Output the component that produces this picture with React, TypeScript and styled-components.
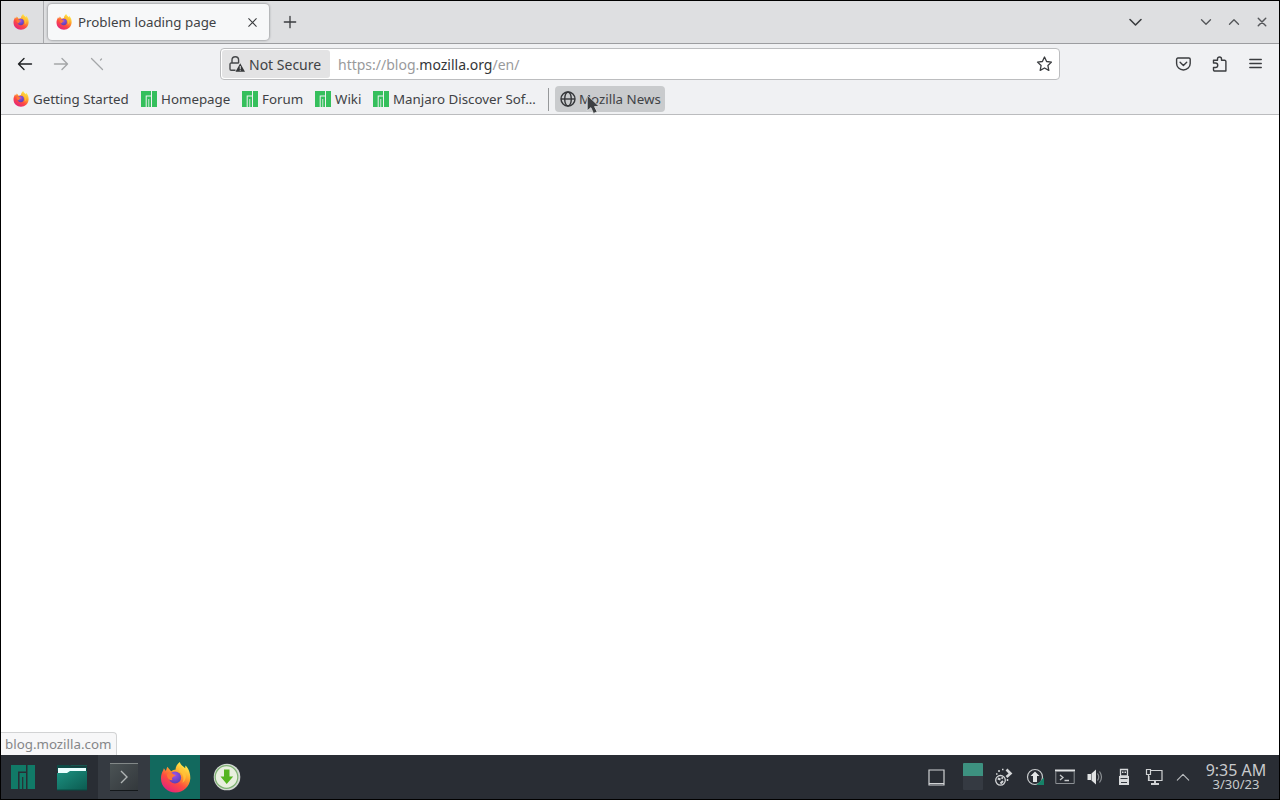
import styled, { createGlobalStyle } from 'styled-components';

const GlobalStyle = createGlobalStyle`
    * {
        box-sizing: border-box;
    }

    body {
        margin: 0;
        overflow: hidden;
        background: #000;
        font-family: 'Noto Sans', sans-serif;
        font-size: 13.33px;
        color: #404245;
    }

    svg {
        display: block;
        flex: none;
    }
`;

const Screen = styled.div`
    width: 1280px;
    height: 800px;
    padding: 1px;
    background: #000;
    display: flex;
    flex-direction: column;
    cursor: default;
    white-space: nowrap;
`;

const TabBar = styled.div`
    height: 43px;
    flex: none;
    display: flex;
    align-items: center;
    background: #dedfe1;
    border-bottom: 1px solid #9c9da0;
`;

const PinnedTab = styled.div`
    width: 43px;
    height: 42px;
    padding-left: 12px;
    display: flex;
    align-items: center;
    border-right: 1px solid #aaabae;
`;

const Tab = styled.div`
    width: 221px;
    height: 36px;
    margin-left: 4px;
    padding: 0 11px 0 8px;
    display: flex;
    align-items: center;
    background: #f7f8f9;
    border-radius: 4px;
    box-shadow: 0 0 2px 1px #a9aaad;
`;

const TabTitle = styled.span`
    flex: 1;
    margin-left: 6px;
`;

const NewTab = styled.div`
    margin-left: 14px;
    flex: 1;
`;

const WindowControls = styled.div`
    display: flex;
    align-items: center;
    padding-right: 11px;
`;

const Control = styled.div<{ $gap?: number }>`
    margin-right: ${({ $gap = 0 }) => $gap}px;
`;

const NavBar = styled.div`
    height: 40px;
    flex: none;
    display: flex;
    align-items: center;
    padding: 0 16px 0 16px;
    background: #f0f1f3;
`;

const NavButtons = styled.div`
    width: 203px;
    display: flex;
    gap: 20px;
`;

const UrlBar = styled.div`
    width: 840px;
    height: 32px;
    padding: 1px 7px 1px 1px;
    display: flex;
    align-items: center;
    background: #fff;
    border: 1px solid #bcbdbf;
    border-radius: 4px;
    font-size: 14px;
`;

const Identity = styled.div`
    width: 108px;
    height: 28px;
    padding-left: 7px;
    display: flex;
    align-items: center;
    gap: 4px;
    background: #e3e3e4;
    border-radius: 3px;
`;

const Url = styled.div`
    flex: 1;
    margin-left: 8px;
    color: #999a9c;

    b {
        font-weight: 400;
        color: #343638;
    }
`;

const NavTools = styled.div`
    margin-left: auto;
    display: flex;
    gap: 20px;
`;

const BookmarksBar = styled.div`
    height: 31px;
    flex: none;
    display: flex;
    align-items: center;
    padding-left: 12px;
    background: #f0f1f3;
    border-bottom: 1px solid #bbbcbe;
`;

const Bookmark = styled.div<{ $width: number; $hovered?: boolean }>`
    position: relative;
    width: ${({ $width }) => $width}px;
    height: 26px;
    padding-left: ${({ $hovered }) => ($hovered ? 5 : 0)}px;
    display: flex;
    align-items: center;
    gap: ${({ $hovered }) => ($hovered ? 3 : 4)}px;
    border-radius: 4px;
    background: ${({ $hovered }) => ($hovered ? '#c9cbcd' : 'transparent')};
`;

const Separator = styled.div`
    width: 1px;
    height: 23px;
    margin-right: 6px;
    background: #96989a;
`;

const Pointer = styled.div`
    position: absolute;
    left: 31px;
    top: 8px;
`;

const Page = styled.div`
    flex: 1;
    display: flex;
    align-items: flex-end;
    background: #fff;
`;

const StatusPanel = styled.div`
    width: 116px;
    height: 23px;
    padding-left: 4px;
    line-height: 22px;
    color: #858688;
    background: #f7f7f8;
    border: solid #d2d3d4;
    border-width: 1px 1px 0 0;
    border-top-right-radius: 4px;
`;

const Taskbar = styled.div`
    height: 44px;
    flex: none;
    display: flex;
    background: #292d34;
`;

const Task = styled.div<{ $width: number; $color?: string }>`
    width: ${({ $width }) => $width}px;
    height: 44px;
    display: flex;
    align-items: center;
    justify-content: center;
    background: ${({ $color }) => $color || 'transparent'};
`;

const Tray = styled.div`
    margin-left: auto;
    display: flex;
    align-items: center;
`;

const TrayItem = styled.div<{ $width: number }>`
    width: ${({ $width }) => $width}px;
    display: flex;
    justify-content: center;
`;

const Pager = styled.div`
    width: 20px;
    height: 27px;
    margin-bottom: 2px;
    border-radius: 1px;
    background: linear-gradient(#3d9180 0 13px, #353a42 13px);
`;

const Clock = styled.div`
    width: 85px;
    padding-right: 1px;
    text-align: center;
    color: #c8cacc;
    font-size: 16px;
    line-height: 14px;
`;

const ClockDate = styled.div`
    font-size: 13px;
    line-height: 14px;
`;

function FirefoxIcon({ size, id }: { size: number; id: string }) {
    return (
        <svg width={size} height={size} viewBox="0 0 32 32">
            <defs>
                <linearGradient id={`${id}-body`} x1="0.8" y1="0.05" x2="0.25" y2="0.95">
                    <stop offset="0.05" stopColor="#ffe84a" />
                    <stop offset="0.35" stopColor="#ffa52b" />
                    <stop offset="0.65" stopColor="#ff4c41" />
                    <stop offset="1" stopColor="#e3257a" />
                </linearGradient>
                <radialGradient id={`${id}-globe`} cx="0.45" cy="0.3" r="0.7">
                    <stop offset="0" stopColor="#a153e8" />
                    <stop offset="1" stopColor="#5840b5" />
                </radialGradient>
            </defs>
            <path
                d="M20.500 0c.5 3 3.500 4.200 5.500 6.500.2-1.200 0-2 .3-2.800 3.600 3.200 5.200 9 5 13.300C30.700 25.500 24 31.500 16 31.500S1 25.500 1 17c0-3.500 1-6 2.300-8.500L4 6.500l2 2.700L7.500 5l4 4.500c2-1 3-1.500 4.500-1.500C16 4.500 18 2 20.500 0z"
                fill={`url(#${id}-body)`}
            />
            <circle cx="15.500" cy="16" r="6.300" fill={`url(#${id}-globe)`} />
            <path d="M7.500 12.500c2.500-2.500 5-1.500 6.500.3 1.500.2 2 .5 2.200 1-.5 1-2 1-2.800 1.600-1.200.8-1.400 2-.4 3-1.500.8-3.500 0-4.500-1.400C7.500 16 6.800 14 7.500 12.500z" fill="#ff7636" />
            <path d="M20 10c4 2 5.500 7 3 11.500 4-2 5-8 2-12.500-1.500-2-3.500-3.500-4-5-1 2-1.500 4-1 6z" fill="#ffc53a" opacity="0.75" />
        </svg>
    );
}

function ManjaroIcon({ size, color }: { size: number; color: string }) {
    return (
        <svg width={size} height={size} viewBox="0 0 16 16" fill={color}>
            <path d="M0 0h10v4.400H4.700V16H0zM5.700 5.400H10V16H8.200V8H7.400v8H5.700zM11 0H16v16h-5z" />
        </svg>
    );
}

function StrokeIcon({ size = 16, d, color = '#3a3c3f', width = 1.4 }: { size?: number; d: string; color?: string; width?: number }) {
    return (
        <svg
            width={size}
            height={size}
            viewBox="0 0 16 16"
            fill="none"
            stroke={color}
            strokeWidth={width}
            strokeLinecap="round"
            strokeLinejoin="round"
        >
            <path d={d} />
        </svg>
    );
}

function LockWarningIcon() {
    return (
        <svg width="16" height="16" viewBox="0 0 16 16">
            <path d="M6.500 14.200H2.200a1.200 1.200 0 0 1-1.200-1.200V8.300A1.200 1.200 0 0 1 2.200 7h7.600M3 7V4a3.300 3.300 0 0 1 6.600 0v3" fill="none" stroke="#46484a" strokeWidth="1.400" />
            <path d="M11.200 7.200L16 15.800H6.500z" fill="#36383a" />
            <path d="M11.250 10v3M11.250 13.700v1" stroke="#e3e3e4" strokeWidth="1" />
        </svg>
    );
}

function GlobeIcon() {
    return (
        <svg width="16" height="16" viewBox="0 0 16 16" fill="none" stroke="#35373a" strokeWidth="1.400">
            <circle cx="8" cy="8" r="7" />
            <ellipse cx="8" cy="8" rx="3.300" ry="7" />
            <path d="M1 8h14" />
        </svg>
    );
}

function FolderIcon() {
    return (
        <svg width="32" height="32" viewBox="0 0 32 32">
            <defs>
                <linearGradient id="folder" x1="0" y1="0" x2="1" y2="1">
                    <stop offset="0" stopColor="#1c9281" />
                    <stop offset="1" stopColor="#0c5a50" />
                </linearGradient>
            </defs>
            <path d="M1 4h12l2 1.500h16V10H1z" fill="#0d4b46" />
            <path d="M14 4h17v1H15z" fill="#16564f" />
            <path d="M2 7h28v6H2z" fill="#eaffff" />
            <path d="M1 12h10l3-2h17v19H1z" fill="url(#folder)" />
            <path d="M1 28.500h30v1H1z" fill="#094b43" />
        </svg>
    );
}

function TerminalIcon() {
    return (
        <svg width="28" height="28" viewBox="0 0 28 28">
            <defs>
                <linearGradient id="terminal" x1="0" y1="0" x2="1" y2="1">
                    <stop offset="0" stopColor="#4b5355" />
                    <stop offset="1" stopColor="#33383c" />
                </linearGradient>
            </defs>
            <path d="M0 0h28v28H0z" fill="url(#terminal)" />
            <path d="M0 .5h28" stroke="#828888" />
            <path d="M0 27.500h28" stroke="#14181b" />
            <path d="M11 8l6 6-6 6" fill="none" stroke="#b0b5b5" strokeWidth="1.400" />
        </svg>
    );
}

function DownloadIcon() {
    return (
        <svg width="28" height="28" viewBox="0 0 28 28">
            <circle cx="14" cy="14" r="13.300" fill="#d3d8d3" />
            <circle cx="13.500" cy="14" r="11.300" fill="#e8efdf" stroke="#7fb373" strokeWidth="1.200" />
            <path d="M11 6.500h5.500v7h3.700L13.700 21l-6.200-7.500H11z" fill="#54b51f" />
        </svg>
    );
}

function SatelliteIcon() {
    return (
        <svg width="20" height="20" viewBox="0 0 20 20" fill="none" stroke="#d4d6d8" strokeWidth="1.600">
            <circle cx="6.500" cy="13.300" r="4.800" strokeWidth="1.300" />
            <path d="M3.800 11.500l2.700 1M6.500 16.500l2.500-2.500M7.500 10.500l1.500 1" strokeWidth="2" />
            <path d="M12.500 2.500l4 4-4 3.500" strokeWidth="2.600" />
            <path d="M4 4h2M8 2.500h1.500M2 7h1.500M13.500 12v2" strokeWidth="1.500" />
        </svg>
    );
}

function UpdateIcon() {
    return (
        <svg width="18" height="18" viewBox="0 0 18 18">
            <circle cx="9" cy="9" r="7.500" fill="none" stroke="#c6c9cb" strokeWidth="1.200" />
            <path d="M9 3.500L13.500 8H11v6H7V8H4.500z" fill="#e3e5e6" />
            <path d="M10.500 17L18 9.500V17z" fill="#168268" />
        </svg>
    );
}

function ConsoleIcon() {
    return (
        <svg width="20" height="16" viewBox="0 0 20 16" fill="none" stroke="#8c9094">
            <path d="M0 1.500h20" strokeWidth="2" stroke="#e0e2e3" />
            <path d="M.8 2v12.500h18.400V2" />
            <path d="M5 6l3 2.500L5 11M9.500 11.500H14" stroke="#c8cacc" strokeWidth="1.300" />
        </svg>
    );
}

function VolumeIcon() {
    return (
        <svg width="18" height="18" viewBox="0 0 18 18">
            <path d="M1.500 6H5v6H1.500zM5.500 5.500L10 1.500v15l-4.500-4z" fill="#e0e2e3" />
            <path d="M11.500 5.500q2.500 3.500 0 7M13.500 3.500q4 5.500 0 11" fill="none" stroke="#8c9094" strokeWidth="1.200" />
        </svg>
    );
}

function UsbIcon() {
    return (
        <svg width="12" height="18" viewBox="0 0 12 18">
            <path d="M2.500 1.500h7V8h-7z" fill="none" stroke="#d8dadc" strokeWidth="1.300" />
            <path d="M4 3.500h1.500V5H4zM6.500 3.500H8V5H6.500z" fill="#d8dadc" />
            <path d="M1 8h10v9H1z" fill="#d8dadc" />
            <path d="M2.500 10.500h7M3 14.500h6" stroke="#353a41" strokeWidth="1.200" />
        </svg>
    );
}

function NetworkIcon() {
    return (
        <svg width="18" height="18" viewBox="0 0 18 18" fill="none" stroke="#d0d2d4" strokeWidth="1.200">
            <path d="M6 2.500h11v10H4V8" />
            <path d="M1.500 1.500h4v5h-4zM3.500 7v6" />
            <path d="M6 16h8M10 13v3" strokeWidth="2" />
        </svg>
    );
}

function PointerIcon() {
    return (
        <svg width="15" height="21" viewBox="0 0 14 20">
            <path d="M1 1v15l3.500-3 2.500 5.500 3.500-1.500L8 12h4.500z" fill="#3e4042" stroke="#e2e3e4" strokeWidth="0.8" />
        </svg>
    );
}

const bookmarks = [
    { label: 'Homepage', width: 101 },
    { label: 'Forum', width: 73 },
    { label: 'Wiki', width: 58 },
    { label: 'Manjaro Discover Sof…', width: 175 },
];

function App() {
    return (
        <Screen>
            <GlobalStyle />

            <TabBar>
                <PinnedTab>
                    <FirefoxIcon size={16} id="pinned" />
                </PinnedTab>
                <Tab>
                    <FirefoxIcon size={16} id="tab" />
                    <TabTitle>Problem loading page</TabTitle>
                    <StrokeIcon size={11} width={1.6} d="M2.500 2.500l11 11M13.500 2.500l-11 11" />
                </Tab>
                <NewTab>
                    <StrokeIcon size={14} width={1.5} d="M8 1.500v13M1.500 8h13" />
                </NewTab>
                <WindowControls>
                    <Control $gap={56}>
                        <StrokeIcon d="M2 5.500L7.500 11 13 5.500" width={1.6} />
                    </Control>
                    <Control $gap={16}>
                        <StrokeIcon size={12} d="M2 5l6 6 6-6" color="#55575a" width={1.8} />
                    </Control>
                    <Control $gap={16}>
                        <StrokeIcon size={12} d="M2 11l6-6 6 6" color="#55575a" width={1.8} />
                    </Control>
                    <StrokeIcon size={12} d="M3 3l10 10M13 3L3 13" color="#55575a" width={1.9} />
                </WindowControls>
            </TabBar>

            <NavBar>
                <NavButtons>
                    <StrokeIcon d="M14.500 8H1.500M7 2.500L1.500 8 7 13.500" color="#1e2023" />
                    <StrokeIcon d="M1.500 8h13M9 2.500L14.500 8 9 13.500" color="#a4a6a8" />
                    <StrokeIcon d="M2.500 2.500l11 11M11.500 4l1-1" color="#a4a6a8" width={1.3} />
                </NavButtons>
                <UrlBar>
                    <Identity>
                        <LockWarningIcon />
                        Not Secure
                    </Identity>
                    <Url>
                        https://blog.<b>mozilla.org</b>/en/
                    </Url>
                    <StrokeIcon d="M8.500 1l2.100 4.500 4.900.6-3.600 3.400.9 4.900L8.500 12l-4.300 2.400.9-4.900L1.500 6.100l4.900-.6z" width={1.3} />
                </UrlBar>
                <NavTools>
                    <StrokeIcon d="M2.900 2h11a1.300 1.300 0 0 1 1.300 1.300V7.500a6.800 6.500 0 0 1-13.600 0V3.300A1.300 1.300 0 0 1 2.900 2zM5.100 6.300L8.400 9.500l3.300-3.200" width={1.4} />
                    <StrokeIcon d="M2.500 7V4.300h4V3a2 2 0 0 1 4 0v1.300h3.200a1.200 1.200 0 0 1 1.200 1.200V15H3.700A1.200 1.200 0 0 1 2.500 13.800V11.500h2a2.200 2.200 0 0 0 0-4.500z" width={1.4} />
                    <StrokeIcon d="M2.800 3.500h11.500M2.800 7.500h11.500M2.800 11.500h11.500" width={1.3} />
                </NavTools>
            </NavBar>

            <BookmarksBar>
                <Bookmark $width={128}>
                    <FirefoxIcon size={16} id="bookmark" />
                    Getting Started
                </Bookmark>
                {bookmarks.map(({ label, width }) => (
                    <Bookmark key={label} $width={width}>
                        <ManjaroIcon size={16} color="#35bf5c" />
                        {label}
                    </Bookmark>
                ))}
                <Separator />
                <Bookmark $width={110} $hovered>
                    <GlobeIcon />
                    Mozilla News
                    <Pointer>
                        <PointerIcon />
                    </Pointer>
                </Bookmark>
            </BookmarksBar>

            <Page>
                <StatusPanel>blog.mozilla.com</StatusPanel>
            </Page>

            <Taskbar>
                <Task $width={44}>
                    <ManjaroIcon size={24} color="#117a67" />
                </Task>
                <Task $width={53}>
                    <FolderIcon />
                </Task>
                <Task $width={52} $color="#353a41">
                    <TerminalIcon />
                </Task>
                <Task $width={50} $color="#12695e">
                    <FirefoxIcon size={31} id="task" />
                </Task>
                <Task $width={54}>
                    <DownloadIcon />
                </Task>
                <Tray>
                    <TrayItem $width={38}>
                        <svg width="17" height="17" viewBox="0 0 17 17">
                            <path d="M1 1h15v15H1z" fill="none" stroke="#d0d2d4" strokeWidth="1.200" />
                            <path d="M1 14.500h15" stroke="#d0d2d4" />
                        </svg>
                    </TrayItem>
                    <TrayItem $width={36}>
                        <Pager />
                    </TrayItem>
                    <TrayItem $width={26}>
                        <SatelliteIcon />
                    </TrayItem>
                    <TrayItem $width={36}>
                        <UpdateIcon />
                    </TrayItem>
                    <TrayItem $width={24}>
                        <ConsoleIcon />
                    </TrayItem>
                    <TrayItem $width={35}>
                        <VolumeIcon />
                    </TrayItem>
                    <TrayItem $width={24}>
                        <UsbIcon />
                    </TrayItem>
                    <TrayItem $width={36}>
                        <NetworkIcon />
                    </TrayItem>
                    <TrayItem $width={22}>
                        <StrokeIcon size={14} d="M1.500 11.500L8 5l6.500 6.500" color="#b8bbbe" width={1.3} />
                    </TrayItem>
                    <Clock>
                        9:35 AM
                        <ClockDate>3/30/23</ClockDate>
                    </Clock>
                </Tray>
            </Taskbar>
        </Screen>
    );
}

export default App;
